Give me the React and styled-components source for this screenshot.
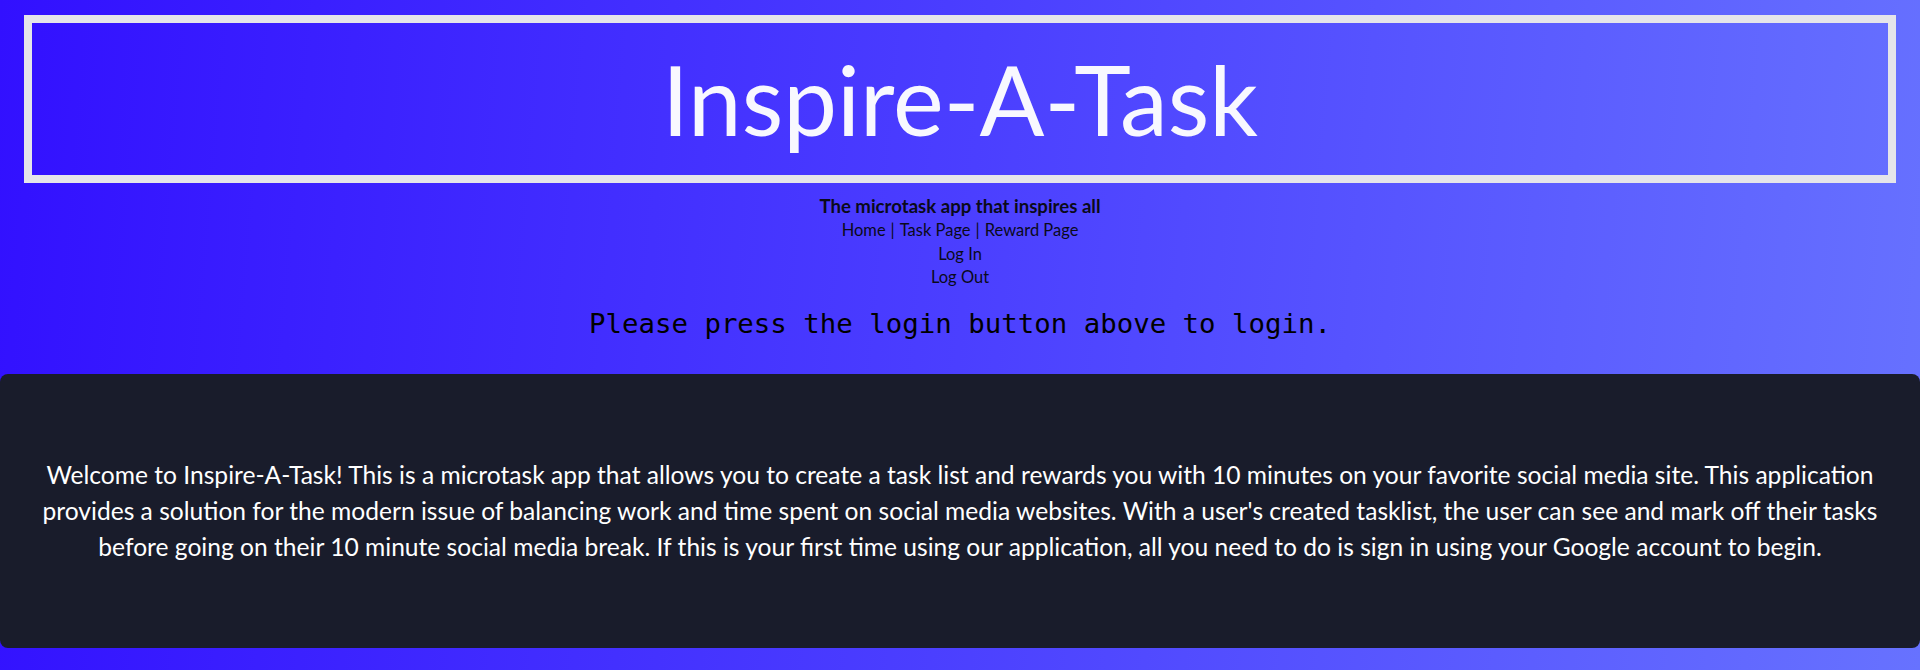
import React from "react";
import styled, { createGlobalStyle } from "styled-components";

const GlobalStyle = createGlobalStyle`
  html, body {
    margin: 0;
    padding: 0;
  }
  body {
    font-family: Lato, "Liberation Sans", sans-serif;
  }
`;

const Page = styled.div`
  min-height: 670px;
  box-sizing: border-box;
  padding-top: 15px;
  background: linear-gradient(95deg, #3210ff 0%, #4b3fff 50%, #6772ff 100%);
  display: flex;
  flex-direction: column;
`;

const HeaderBox = styled.header`
  margin: 0 24px;
  height: 152px;
  border: 8px solid #e5e5ea;
  display: flex;
  align-items: center;
  justify-content: center;
`;

const Title = styled.h1`
  margin: 0;
  font-family: Lato, "Liberation Sans", sans-serif;
  font-weight: 400;
  font-size: 96px;
  line-height: 1;
  color: #f8f8ff;
`;

const Tagline = styled.p`
  margin: 12px 0 0;
  text-align: center;
  font-weight: 700;
  font-size: 18.6px;
  line-height: 22px;
  color: #0a0a1a;
`;

const NavBlock = styled.nav`
  display: flex;
  flex-direction: column;
  align-items: center;
  margin-top: 2px;
`;

const NavLine = styled.div`
  font-size: 16.5px;
  line-height: 23.5px;
  color: #0a0a1a;
`;

const NavLink = styled.a`
  color: inherit;
  text-decoration: none;
  cursor: pointer;
`;

const Sep = styled.span`
  margin: 0 5px;
`;

const Prompt = styled.h2`
  margin: 18px 0 0;
  text-align: center;
  font-family: "DejaVu Sans Mono", "Liberation Mono", monospace;
  font-weight: 400;
  font-size: 27.4px;
  line-height: 32px;
  color: #000;
`;

const InfoPanel = styled.section`
  margin-top: 34px;
  height: 274px;
  box-sizing: border-box;
  padding: 0 28px;
  background: #191c2b;
  border-radius: 8px;
  display: flex;
  align-items: center;
  justify-content: center;
`;

const InfoText = styled.p`
  margin: 0;
  text-align: center;
  font-size: 24.6px;
  line-height: 36px;
  color: #ffffff;
`;

export default function App() {
  return (
    <>
      <GlobalStyle />
      <Page>
        <HeaderBox>
          <Title>Inspire-A-Task</Title>
        </HeaderBox>
        <Tagline>The microtask app that inspires all</Tagline>
        <NavBlock>
          <NavLine>
            <NavLink>Home</NavLink>
            <Sep>|</Sep>
            <NavLink>Task Page</NavLink>
            <Sep>|</Sep>
            <NavLink>Reward Page</NavLink>
          </NavLine>
          <NavLine>
            <NavLink>Log In</NavLink>
          </NavLine>
          <NavLine>
            <NavLink>Log Out</NavLink>
          </NavLine>
        </NavBlock>
        <Prompt>Please press the login button above to login.</Prompt>
        <InfoPanel>
          <InfoText>
            Welcome to Inspire-A-Task! This is a microtask app that allows you to create a task list and rewards you with 10 minutes on your favorite social media site. This application provides a solution for the modern issue of balancing work and time spent on social media websites. With a user's created tasklist, the user can see and mark off their tasks before going on their 10 minute social media break. If this is your first time using our application, all you need to do is sign in using your Google account to begin.
          </InfoText>
        </InfoPanel>
      </Page>
    </>
  );
}
